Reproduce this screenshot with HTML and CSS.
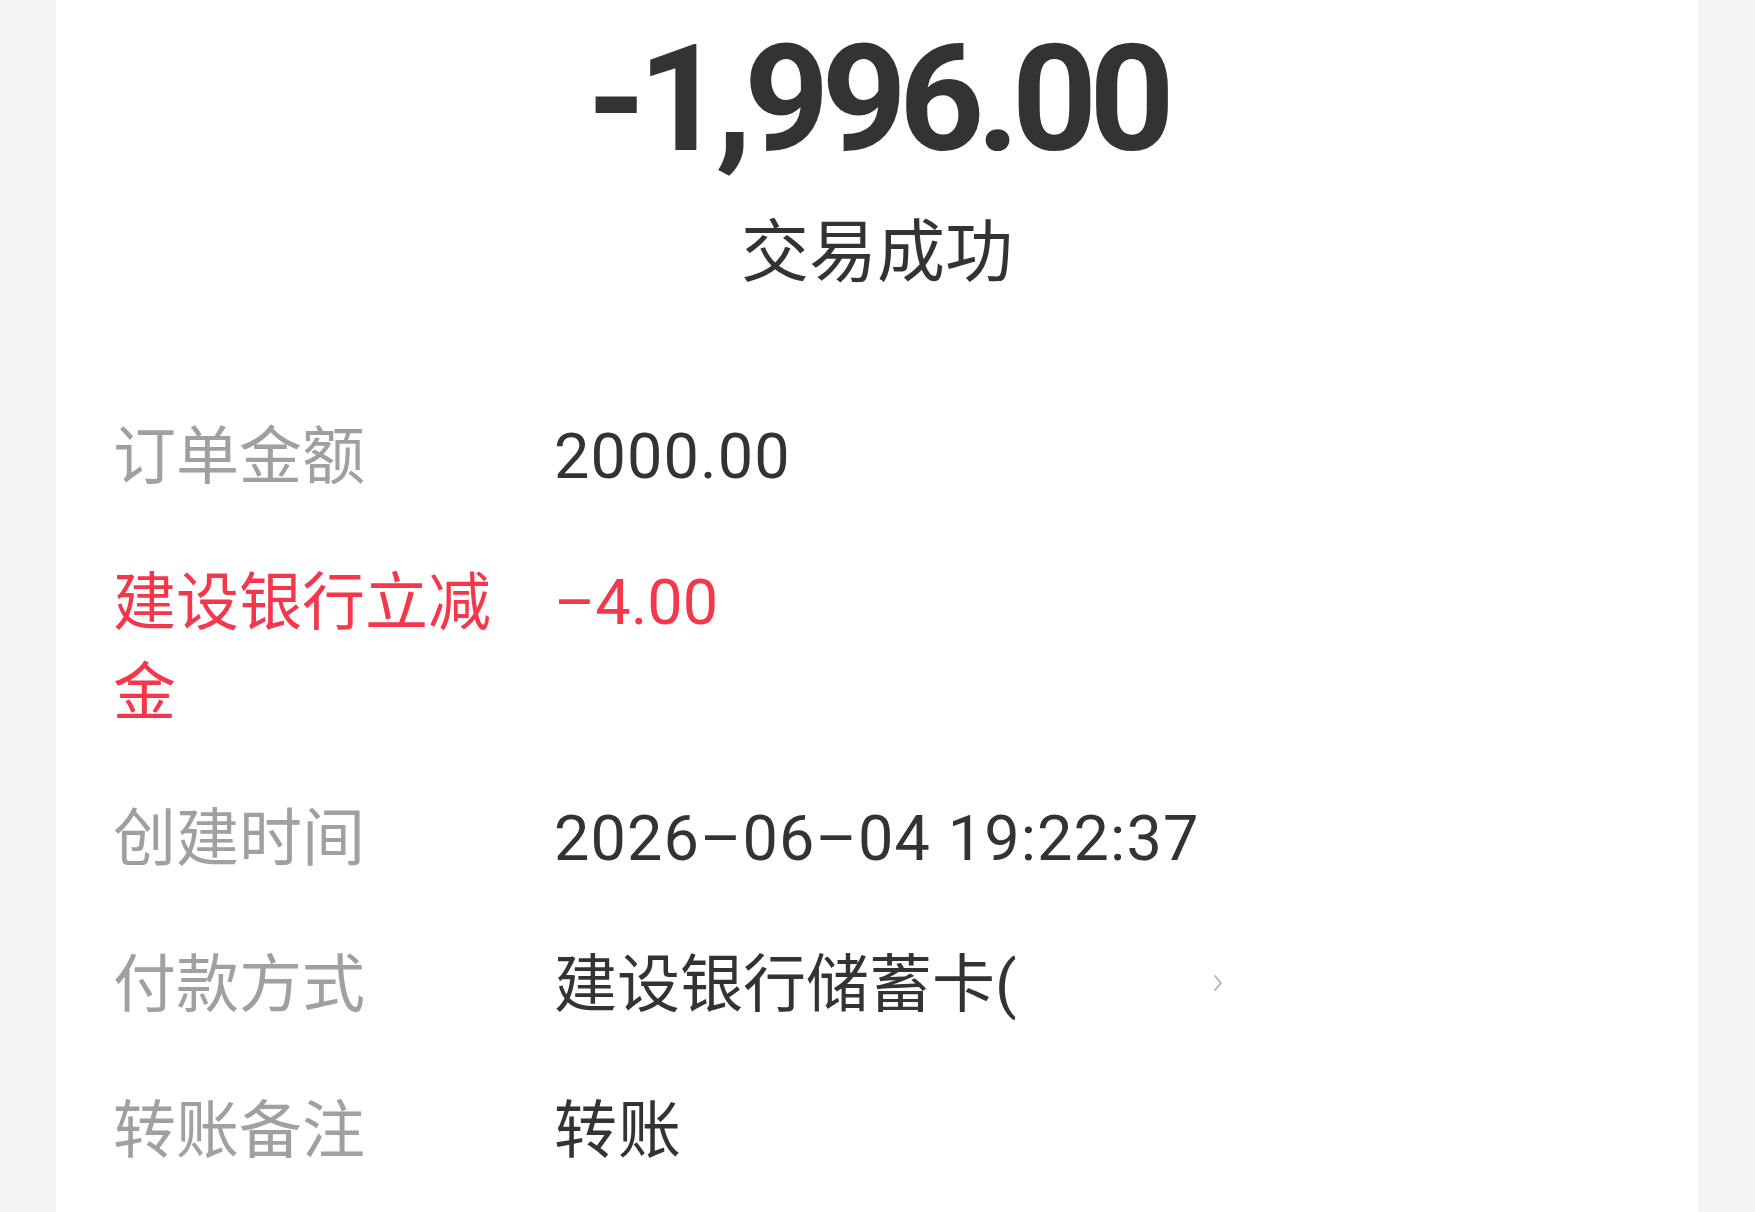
FILE: index.html
```html
<!DOCTYPE html>
<html lang="zh-CN">
<head>
    <meta charset="UTF-8">
    <meta name="viewport" content="width=device-width, initial-scale=1.0">
    <title>账单详情</title>
    <link rel="stylesheet" href="styles.css">
</head>
<body>
    <div class="card">
        <header class="summary">
            <div class="amount">-1,996.00</div>
            <div class="status">交易成功</div>
        </header>

        <main class="details">
            <div class="row">
                <div class="label">订单金额</div>
                <div class="value">2000.00</div>
            </div>
            <div class="row promo">
                <div class="label">建设银行立减金</div>
                <div class="value">&ndash;4.00</div>
            </div>
            <div class="row">
                <div class="label">创建时间</div>
                <div class="value">2026&ndash;06&ndash;04 19:22:37</div>
            </div>
            <div class="row">
                <div class="label">付款方式</div>
                <div class="value pay">
                    <span>建设银行储蓄卡(</span>
                    <span class="masked"></span>
                    <svg class="chevron" viewBox="0 0 10 20" width="10" height="20">
                        <polyline points="2,3 8,10 2,17" fill="none" stroke="#b0b0b0" stroke-width="1.8" stroke-linecap="round" stroke-linejoin="round"/>
                    </svg>
                </div>
            </div>
            <div class="row">
                <div class="label">转账备注</div>
                <div class="value">转账</div>
            </div>
        </main>
    </div>
</body>
</html>
```

FILE: styles.css
```css
/* Reset */
* {
  margin: 0;
  padding: 0;
  box-sizing: border-box;
}

body {
  background-color: #f5f5f5;
  font-family: "Roboto", "Noto Sans CJK SC", sans-serif;
  color: #333;
  height: 100vh;
  overflow: hidden;
}

/* Card */
.card {
  margin: 0 57px 0 56px;
  height: 100%;
  background-color: #fff;
}

/* Amount + status */
.summary {
  text-align: center;
  padding-top: 25px;
}

.amount {
  font-family: "Roboto", sans-serif;
  font-weight: 700;
  font-size: 149px;
  line-height: 149px;
  letter-spacing: -8px;
  color: #333;
}

.status {
  margin-top: 28px;
  font-family: "Noto Sans CJK SC", sans-serif;
  font-size: 68px;
  line-height: 90px;
  color: #333;
}

/* Detail rows */
.details {
  display: flex;
  flex-direction: column;
  gap: 56px;
  padding: 120px 57px 0;
}

.row {
  display: flex;
  align-items: flex-start;
  font-size: 63px;
  line-height: 90px;
}

.label {
  width: 420px;
  flex-shrink: 0;
  margin-right: 21px;
  color: #a0a0a0;
}

.value {
  color: #333;
  letter-spacing: 1.1px;
}

.promo .label,
.promo .value {
  color: #f5374b;
}

.promo .value {
  letter-spacing: 0;
}

.pay {
  display: flex;
  align-items: center;
  letter-spacing: 0;
}

.masked {
  width: 196px;
  height: 60px;
}

.chevron {
  display: block;
  margin-top: -4px;
}
```
